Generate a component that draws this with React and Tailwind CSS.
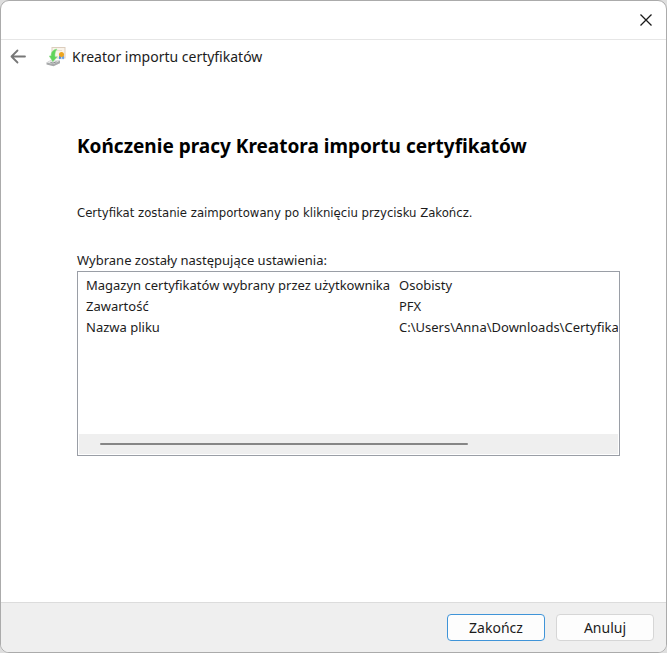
import React from 'react';

const settings = [
    {name: 'Magazyn certyfikatów wybrany przez użytkownika', value: 'Osobisty'},
    {name: 'Zawartość', value: 'PFX'},
    {name: 'Nazwa pliku', value: 'C:\\Users\\Anna\\Downloads\\Certyfika'},
];

function BackIcon() {
    return (
        <svg width="16" height="16" viewBox="0 0 16 16" fill="none" stroke="#777777" strokeWidth="1.8" strokeLinecap="round" strokeLinejoin="round" aria-hidden="true">
            <path d="M15 7.500H1.500M7.500 1.500l-6 6 6 6" />
        </svg>
    );
}

function CloseIcon() {
    return (
        <svg width="12" height="12" viewBox="0 0 12 12" stroke="#1a1a1a" strokeWidth="1.3" aria-hidden="true">
            <path d="M0.5 0.5l11 11M11.5 0.5l-11 11" />
        </svg>
    );
}

// Certificate with a green arrow pointing down to a disk
function WizardIcon() {
    return (
        <svg width="20" height="20" viewBox="0 0 20 20" aria-hidden="true">
            <rect x="6" y="0.5" width="13" height="10.500" fill="#faf4ea" stroke="#dccdbd" />
            <path d="M9 3.500h7" stroke="#e8dfd3" />
            <path d="M0.500 15.500L6 12.500l8 1v2.800L7.500 19.200l-7-1.700z" fill="#a8aaab" />
            <path d="M0.500 15.500L6 12.500l8 1L7.500 17z" fill="#e4e5e5" />
            <path d="M4.500 15.500l2.500.6 3.500-1.400" stroke="#8b8e8f" fill="none" />
            <path d="M11 2C7 2.500 4.800 5.500 5.200 8.800L3.200 9l3.600 5.700 4.600-5-2.400.1c-.3-2.600.2-5.400 2-7.800z" fill="#5fd45a" stroke="#90dc8c" strokeWidth="0.5" />
            <path d="M13 8.500v4l1.200-1 1 1V8.500z" fill="#4f8fe0" />
            <path d="M16 8.500v4l.8-1 1.200 1v-4z" fill="#6ba2e6" />
            <circle cx="15.500" cy="7.500" r="2.500" fill="#eda51f" />
        </svg>
    );
}

export default function App() {
    return (
        <div className="min-h-screen bg-[#dedede]">
            <div className="flex min-h-screen flex-col overflow-hidden rounded-[9px] border border-[#ababab] bg-white font-['Noto_Sans',sans-serif] text-sm text-[#1c1c1c]">
                <div className="flex h-[39px] shrink-0 items-center justify-end border-b border-[#e6e6e6] pr-[14px]">
                    <button type="button" aria-label="Zamknij">
                        <CloseIcon />
                    </button>
                </div>

                <header className="flex h-[34px] shrink-0 items-center gap-5 px-[9px]">
                    <button type="button" aria-label="Wstecz">
                        <BackIcon />
                    </button>
                    <div className="flex items-center gap-[6px]">
                        <WizardIcon />
                        <span>Kreator importu certyfikatów</span>
                    </div>
                </header>

                <main className="flex grow flex-col pt-[58px] pr-[46px] pl-[76px] text-[13px]">
                    <h1 className="text-[19px] leading-7 font-bold text-black">
                        Kończenie pracy Kreatora importu certyfikatów
                    </h1>
                    <p className="mt-[43px] font-['DejaVu_Sans_Condensed','DejaVu_Sans',sans-serif] leading-5">
                        Certyfikat zostanie zaimportowany po kliknięciu przycisku Zakończ.
                    </p>
                    <p id="settings-label" className="mt-[27px] leading-5">
                        Wybrane zostały następujące ustawienia:
                    </p>

                    <div className="mt-[1px] flex min-h-[185px] flex-col overflow-hidden border border-[#9a9ea6] p-[1px]">
                        <div className="grow overflow-hidden pt-[2px]">
                            <table aria-labelledby="settings-label" className="leading-[21px] whitespace-nowrap">
                                <tbody>
                                    {settings.map((row) => (
                                        <tr key={row.name}>
                                            <td className="w-[313px] min-w-[313px] pl-[7px]">{row.name}</td>
                                            <td className="pl-[7px]">{row.value}</td>
                                        </tr>
                                    ))}
                                </tbody>
                            </table>
                        </div>
                        <div className="flex h-5 shrink-0 items-center bg-[#efefef] px-[21px]">
                            <div className="h-[2px] w-[74%] rounded-full bg-[#868686]" />
                        </div>
                    </div>
                </main>

                <footer className="flex shrink-0 justify-end gap-[11px] border-t border-[#dcdcdc] bg-[#efefef] pt-[11px] pr-3 pb-[11px]">
                    <button type="button" className="h-[27px] w-[98px] rounded border border-[#3f94d8] bg-[#fdfdfd]">
                        Zakończ
                    </button>
                    <button type="button" className="h-[27px] w-[98px] rounded border border-[#d6d6d6] bg-[#fdfdfd]">
                        Anuluj
                    </button>
                </footer>
            </div>
        </div>
    );
}
